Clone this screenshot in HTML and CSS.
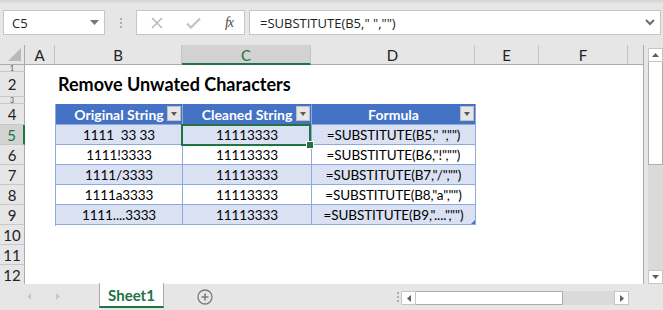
FILE: index.html
```html
<!DOCTYPE html>
<html lang="en">
<head>
    <meta charset="UTF-8">
    <title>Remove Unwated Characters</title>
    <link rel="stylesheet" href="styles.css">
</head>
<body>
    <div id="app">
        <!-- formula bar -->
        <div id="formula-row">
            <div class="name-box">
                <span>C5</span>
                <svg width="9" height="5" viewBox="0 0 9 5"><path d="M0 0h9L4.5 5z" fill="#767676"/></svg>
            </div>
            <div class="grip"><i></i><i></i><i></i></div>
            <div class="fx-box">
                <svg width="12" height="12" viewBox="0 0 12 12"><path d="M1 1l10 10M11 1L1 11" stroke="#bcbcbc" stroke-width="1.6" fill="none"/></svg>
                <svg width="15" height="12" viewBox="0 0 15 12"><path d="M1 6.5l4 4L14 1.5" stroke="#c3c3c3" stroke-width="2.2" fill="none"/></svg>
                <span class="fx">fx</span>
            </div>
            <div class="formula-input">
                <span>=SUBSTITUTE(B5," ","")</span>
                <svg width="10" height="7" viewBox="0 0 10 7"><path d="M1 1l4 4 4-4" stroke="#6d6d6d" stroke-width="2" fill="none"/></svg>
            </div>
        </div>

        <!-- sheet -->
        <div id="workspace">
            <div id="sheet">
                <div class="corner"><span></span></div>
                <div class="col-head">A</div>
                <div class="col-head">B</div>
                <div class="col-head active">C</div>
                <div class="col-head">D</div>
                <div class="col-head">E</div>
                <div class="col-head">F</div>
                <div class="col-head last"></div>

                <div class="cells"></div>

                <div class="row-head short">1</div>
                <div class="row-head">2</div>
                <div class="row-head short">3</div>
                <div class="row-head">4</div>
                <div class="row-head active">5</div>
                <div class="row-head">6</div>
                <div class="row-head">7</div>
                <div class="row-head">8</div>
                <div class="row-head">9</div>
                <div class="row-head">10</div>
                <div class="row-head">11</div>
                <div class="row-head last">12</div>

                <div class="title">Remove Unwated Characters</div>

                <div class="data-table">
                    <div class="th">Original String<span class="filter"></span></div>
                    <div class="th">Cleaned String<span class="filter"></span></div>
                    <div class="th">Formula<span class="filter"></span></div>

                    <div class="td band">1111  33 33</div>
                    <div class="td band">11113333</div>
                    <div class="td band">=SUBSTITUTE(B5," ","")</div>

                    <div class="td">1111!3333</div>
                    <div class="td">11113333</div>
                    <div class="td">=SUBSTITUTE(B6,"!","")</div>

                    <div class="td band">1111/3333</div>
                    <div class="td band">11113333</div>
                    <div class="td band">=SUBSTITUTE(B7,"/","")</div>

                    <div class="td">1111a3333</div>
                    <div class="td">11113333</div>
                    <div class="td">=SUBSTITUTE(B8,"a","")</div>

                    <div class="td band">1111....3333</div>
                    <div class="td band">11113333</div>
                    <div class="td band">=SUBSTITUTE(B9,"....","")<span class="resize"></span></div>
                </div>

                <div class="selection"><span class="fill-handle"></span></div>
            </div>

            <div id="vscroll">
                <div class="arrow-box"><svg width="7" height="4" viewBox="0 0 7 4"><path d="M0 4h7L3.5 0z" fill="#606060"/></svg></div>
                <div class="v-thumb"></div>
                <div class="v-track"></div>
                <div class="arrow-box"><svg width="7" height="4" viewBox="0 0 7 4"><path d="M0 0h7L3.5 4z" fill="#606060"/></svg></div>
            </div>
        </div>

        <!-- sheet tabs -->
        <div id="tab-row">
            <div class="tab-nav">
                <svg width="4" height="7" viewBox="0 0 4 7"><path d="M4 0v7L0 3.5z" fill="#c8c8c8"/></svg>
                <svg width="4" height="7" viewBox="0 0 4 7"><path d="M0 0v7l4-3.5z" fill="#c8c8c8"/></svg>
            </div>
            <div class="sheet-tab">Sheet1</div>
            <div class="add-sheet">
                <svg width="16" height="16" viewBox="0 0 16 16"><circle cx="8" cy="8" r="7" stroke="#7b7b7b" stroke-width="1.3" fill="none"/><path d="M8 4.5v7M4.5 8h7" stroke="#7b7b7b" stroke-width="1.6"/></svg>
            </div>
            <div class="grip small"><i></i><i></i><i></i></div>
            <div class="hscroll">
                <div class="arrow-box h"><svg width="4" height="7" viewBox="0 0 4 7"><path d="M4 0v7L0 3.5z" fill="#606060"/></svg></div>
                <div class="h-thumb"></div>
                <div class="h-track"></div>
                <div class="arrow-box h"><svg width="4" height="7" viewBox="0 0 4 7"><path d="M0 0v7l4-3.5z" fill="#606060"/></svg></div>
            </div>
        </div>
    </div>
</body>
</html>
```

FILE: styles.css
```css
* {
    box-sizing: border-box;
}

body {
    margin: 0;
    background-color: #e6e6e6;
    font-family: Lato, "Liberation Sans", sans-serif;
    color: #222;
}

#app {
    width: 663px;
    height: 310px;
    display: flex;
    flex-direction: column;
    overflow: hidden;
}

/* formula bar */

#formula-row {
    height: 45px;
    flex: none;
    display: flex;
    align-items: flex-start;
    padding: 10px 2px 0 3px;
    background: linear-gradient(#d2d2d2, #e6e6e6 4px);
}

.name-box {
    width: 102px;
    height: 25px;
    border: 1px solid #c6c6c6;
    background-color: white;
    display: flex;
    align-items: center;
    justify-content: space-between;
    padding: 0 5px 0 8px;
    font-family: "Open Sans", sans-serif;
    font-size: 13px;
}

.grip {
    width: 31px;
    height: 25px;
    display: flex;
    flex-direction: column;
    align-items: center;
    justify-content: center;
    gap: 2px;
}

.grip i {
    width: 2px;
    height: 2px;
    background-color: #adadad;
}

.fx-box {
    width: 109px;
    height: 25px;
    border: 1px solid #c6c6c6;
    background-color: white;
    display: flex;
    align-items: center;
    padding: 0 11px 0 14px;
    justify-content: space-between;
}

.fx {
    font-family: "Liberation Serif", serif;
    font-style: italic;
    font-size: 14px;
    color: #4a4a4a;
    letter-spacing: -1px;
}

.formula-input {
    flex: 1;
    margin-left: 4px;
    height: 25px;
    border: 1px solid #c6c6c6;
    background-color: white;
    display: flex;
    align-items: center;
    justify-content: space-between;
    padding: 0 5px 0 10px;
    font-family: "Open Sans", sans-serif;
    font-size: 13px;
    white-space: pre;
}

/* sheet grid */

#workspace {
    height: 239px;
    flex: none;
    display: flex;
}

#sheet {
    width: 644px;
    display: grid;
    grid-template-columns: 25px 30px 127px 129px 164px 64px 89px 1fr;
    grid-template-rows: 20px 7px 25px 7px 21px repeat(7, 20px) 19px;
    border-right: 1px solid #ababab;
    border-bottom: 1px solid #ababab;
    font-size: 15px;
}

.corner {
    background-color: #e6e6e6;
    border-right: 1px solid #ababab;
    border-bottom: 1px solid #ababab;
    position: relative;
}

.corner span {
    position: absolute;
    right: 3px;
    bottom: 3px;
    width: 0;
    height: 0;
    border-left: 13px solid transparent;
    border-bottom: 13px solid #b9b9b9;
}

.col-head {
    background-color: #e6e6e6;
    border-right: 1px solid #c4c4c4;
    border-bottom: 1px solid #ababab;
    display: flex;
    align-items: center;
    justify-content: center;
    padding-top: 1px;
}

.col-head.last {
    border-right: none;
}

.col-head.active {
    background-color: #d2d2d2;
    color: #217346;
    border-bottom: 2px solid #217346;
}

.cells {
    grid-column: 2 / -1;
    grid-row: 2 / -1;
    background-color: white;
}

.row-head {
    grid-column: 1;
    background-color: #e6e6e6;
    border-right: 1px solid #ababab;
    border-bottom: 1px solid #c8c8c8;
    display: flex;
    align-items: center;
    justify-content: center;
    overflow: hidden;
    line-height: 20px;
}

.row-head.short {
    font-size: 7px;
    line-height: 6px;
    color: #555;
}

.row-head.last {
    border-bottom: none;
}

.row-head.active {
    background-color: #d2d2d2;
    color: #217346;
    border-right: 2px solid #217346;
}

.title {
    grid-column: 3 / 6;
    grid-row: 3;
    align-self: end;
    padding: 0 0 2px 3px;
    font-size: 18px;
    font-weight: bold;
    color: black;
    white-space: nowrap;
}

/* excel table */

.data-table {
    grid-column: 3 / 6;
    grid-row: 5 / 11;
    display: grid;
    grid-template-columns: 127px 129px 164px;
    grid-template-rows: 21px repeat(5, 20px);
    border-left: 1px solid #8ea9db;
    margin-bottom: -1px;
    font-size: 13.5px;
    letter-spacing: -0.1px;
}

.th,
.td {
    border-right: 1px solid #8ea9db;
    border-bottom: 1px solid #8ea9db;
    display: flex;
    align-items: center;
    justify-content: center;
    white-space: pre;
    color: black;
    position: relative;
}

.th {
    background-color: #4472c4;
    color: white;
    font-weight: bold;
    border-top: 1px solid #4472c4;
    font-size: 14px;
    letter-spacing: 0;
}

.td.band {
    background-color: #d9e1f2;
}

.filter {
    position: absolute;
    right: 1px;
    top: 1px;
    width: 14px;
    height: 15px;
    background-color: #e6e6e6;
    border: 1px solid #bfbfbf;
}

.filter::after {
    content: "";
    position: absolute;
    left: 3px;
    top: 5px;
    border-left: 3px solid transparent;
    border-right: 3px solid transparent;
    border-top: 4px solid #5a5a5a;
}

.resize {
    position: absolute;
    right: 0;
    bottom: 0;
    width: 0;
    height: 0;
    border-left: 4px solid transparent;
    border-bottom: 4px solid #4472c4;
}

.selection {
    grid-column: 4;
    grid-row: 6;
    border: 2px solid #217346;
    margin: -1px 0 -1px -1px;
    position: relative;
}

.fill-handle {
    position: absolute;
    right: -4px;
    bottom: -4px;
    width: 6px;
    height: 6px;
    background-color: #217346;
    outline: 1px solid white;
}

/* vertical scroll bar */

#vscroll {
    width: 19px;
    display: flex;
    flex-direction: column;
    padding: 3px 0 0 4px;
}

.arrow-box {
    height: 14px;
    border: 1px solid #c6c6c6;
    background-color: white;
    display: flex;
    align-items: center;
    justify-content: center;
}

.v-thumb {
    height: 103px;
    background-color: white;
    border: 1px solid #adadad;
    border-top: none;
}

.v-track {
    flex: 1;
    background-color: #dadada;
}

/* sheet tabs */

#tab-row {
    flex: 1;
    display: flex;
    align-items: flex-start;
}

.tab-nav {
    width: 99px;
    height: 25px;
    display: flex;
    align-items: center;
    gap: 25px;
    padding-left: 27px;
}

.sheet-tab {
    width: 65px;
    height: 25px;
    background-color: white;
    border-left: 1px solid #ababab;
    border-right: 1px solid #ababab;
    border-bottom: 2px solid #217346;
    margin-top: -1px;
    display: flex;
    align-items: center;
    justify-content: center;
    font-weight: bold;
    font-size: 15px;
    color: #217346;
}

.add-sheet {
    width: 84px;
    height: 25px;
    display: flex;
    align-items: center;
    padding-left: 33px;
}

.grip.small {
    width: 153px;
    align-items: flex-end;
    padding-right: 2px;
}

.hscroll {
    width: 228px;
    height: 14px;
    margin-top: 7px;
    display: flex;
}

.arrow-box.h {
    width: 15px;
    height: 14px;
}

.h-thumb {
    width: 147px;
    background-color: white;
    border: 1px solid #adadad;
    border-left: none;
}

.h-track {
    flex: 1;
    background-color: #dadada;
}
```
